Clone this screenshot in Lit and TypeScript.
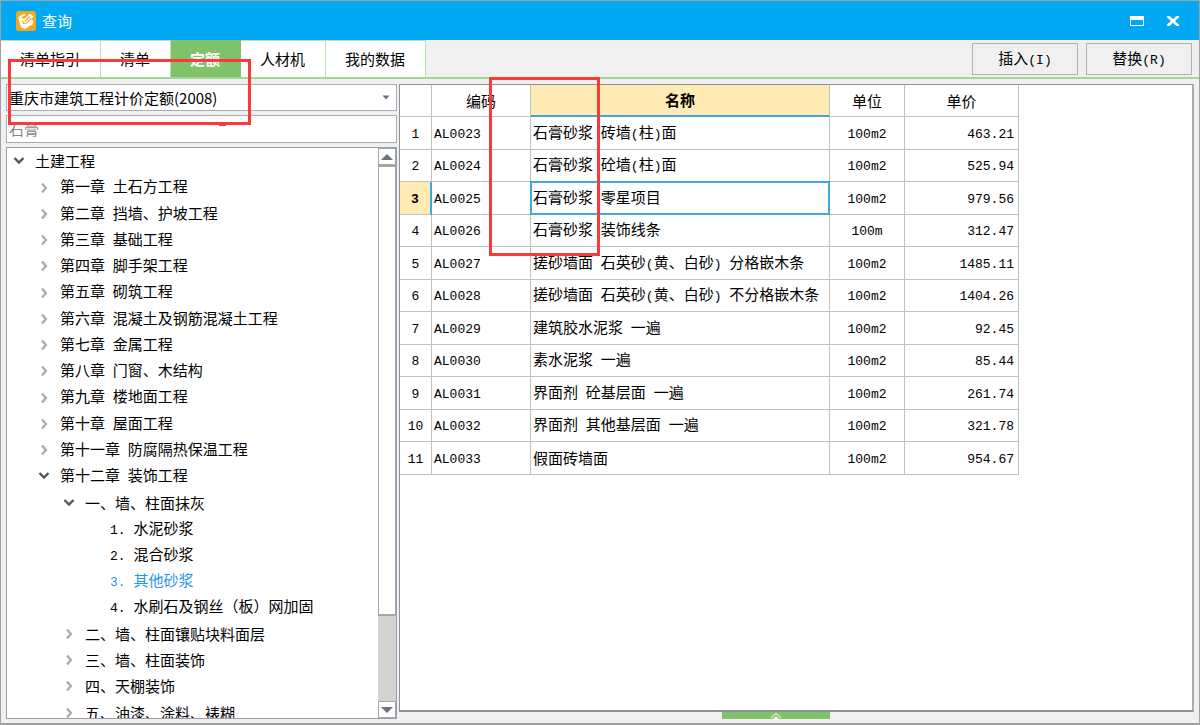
import { LitElement, html, css, svg } from "lit";
import { customElement, state } from "lit/decorators.js";

type Node = { level: number; text: string; arrow?: "open" | "closed" };

const TREE: Node[] = [
  { level: 0, text: "土建工程", arrow: "open" },
  { level: 1, text: "第一章 土石方工程", arrow: "closed" },
  { level: 1, text: "第二章 挡墙、护坡工程", arrow: "closed" },
  { level: 1, text: "第三章 基础工程", arrow: "closed" },
  { level: 1, text: "第四章 脚手架工程", arrow: "closed" },
  { level: 1, text: "第五章 砌筑工程", arrow: "closed" },
  { level: 1, text: "第六章 混凝土及钢筋混凝土工程", arrow: "closed" },
  { level: 1, text: "第七章 金属工程", arrow: "closed" },
  { level: 1, text: "第八章 门窗、木结构", arrow: "closed" },
  { level: 1, text: "第九章 楼地面工程", arrow: "closed" },
  { level: 1, text: "第十章 屋面工程", arrow: "closed" },
  { level: 1, text: "第十一章 防腐隔热保温工程", arrow: "closed" },
  { level: 1, text: "第十二章 装饰工程", arrow: "open" },
  { level: 2, text: "一、墙、柱面抹灰", arrow: "open" },
  { level: 3, text: "1. 水泥砂浆" },
  { level: 3, text: "2. 混合砂浆" },
  { level: 3, text: "3. 其他砂浆" },
  { level: 3, text: "4. 水刷石及钢丝（板）网加固" },
  { level: 2, text: "二、墙、柱面镶贴块料面层", arrow: "closed" },
  { level: 2, text: "三、墙、柱面装饰", arrow: "closed" },
  { level: 2, text: "四、天棚装饰", arrow: "closed" },
  { level: 2, text: "五、油漆、涂料、裱糊", arrow: "closed" },
];

const ROWS: [string, string, string, string][] = [
  ["AL0023", "石膏砂浆 砖墙(柱)面", "100m2", "463.21"],
  ["AL0024", "石膏砂浆 砼墙(柱)面", "100m2", "525.94"],
  ["AL0025", "石膏砂浆 零星项目", "100m2", "979.56"],
  ["AL0026", "石膏砂浆 装饰线条", "100m", "312.47"],
  ["AL0027", "搓砂墙面 石英砂(黄、白砂) 分格嵌木条", "100m2", "1485.11"],
  ["AL0028", "搓砂墙面 石英砂(黄、白砂) 不分格嵌木条", "100m2", "1404.26"],
  ["AL0029", "建筑胶水泥浆 一遍", "100m2", "92.45"],
  ["AL0030", "素水泥浆 一遍", "100m2", "85.44"],
  ["AL0031", "界面剂 砼基层面 一遍", "100m2", "261.74"],
  ["AL0032", "界面剂 其他基层面 一遍", "100m2", "321.78"],
  ["AL0033", "假面砖墙面", "100m2", "954.67"],
];

const TABS = ["清单指引", "清单", "定额", "人材机", "我的数据"];

/** Sets the half-width runs of a label in the monospaced face. */
const mixed = (text: string) =>
  text
    .split(/([\x20-\x7e]+)/)
    .filter((part) => part !== "")
    .map((part) => (/^[\x20-\x7e]/.test(part) ? html`<span class="half">${part}</span>` : part));

const chevron = (kind?: "open" | "closed") =>
  kind === "open"
    ? svg`<path d="M3.500 5 8 9.500 12.500 5" fill="none" stroke="#555" stroke-width="2.4"/>`
    : kind === "closed"
      ? svg`<path d="M6 3.500 10 8 6 12.500" fill="none" stroke="#aaa" stroke-width="2.2"/>`
      : svg``;

@customElement("app-root")
export class AppRoot extends LitElement {
  @state() private tab = 2;
  @state() private node = 16;
  @state() private row = 2;

  static styles = css`
    :host {
      display: block;
      font-family: "Noto Sans CJK SC", sans-serif;
      font-size: 15px;
      line-height: 20px;
      color: #000;
    }
    * {
      box-sizing: border-box;
    }
    button,
    select,
    input {
      font: inherit;
      color: inherit;
      margin: 0;
      padding: 0;
      border-radius: 0;
      outline: none;
    }
    .half {
      font-family: "Liberation Mono", monospace;
      font-size: 13px;
      white-space: pre;
    }
    .window {
      position: relative;
      display: flex;
      flex-direction: column;
      height: 100vh;
      border: 1px solid #a0a0a0;
      border-bottom-width: 2px;
      background: #f0f0f0;
      overflow: hidden;
    }
    .titlebar {
      display: flex;
      align-items: center;
      flex: none;
      height: 39px;
      padding: 0 19px 0 15px;
      gap: 6px;
      background: #02a9f2;
      color: #fff;
    }
    .title {
      flex: 1;
    }
    .winbtn {
      display: flex;
      border: 0;
      background: none;
      margin-left: 16px;
    }
    .toolbar {
      display: flex;
      flex: none;
      height: 39px;
      padding-right: 7px;
      border-bottom: 2px solid #a3d795;
    }
    .tabs {
      display: flex;
      flex: 1;
    }
    .tab {
      border: 0;
      border-top: 1px solid #b6e3a8;
      border-right: 1px solid #b6e3a8;
      background: #fff;
      padding: 0 20px 0 19px;
    }
    .tab.on {
      background: #80c269;
      border-color: #80c269;
      color: #fff;
      font-weight: 700;
    }
    .actions {
      display: flex;
      gap: 8px;
      padding: 3px 0 2px;
    }
    .action {
      width: 106px;
      border: 1px solid #b0b0b0;
      background: #f0f0f0;
    }
    .body {
      display: flex;
      flex: 1;
      min-height: 0;
      gap: 2px;
      padding: 5px 5px 4px;
    }
    .side {
      display: flex;
      flex-direction: column;
      flex: none;
      width: 391px;
      gap: 4px;
    }
    .picker {
      display: grid;
      align-items: center;
      height: 27px;
      border: 1px solid #abadb3;
      background: #fff;
    }
    .picker > * {
      grid-area: 1 / 1;
    }
    .picker select {
      appearance: none;
      width: 100%;
      height: 25px;
      border: 0;
      background: none;
      padding-left: 2px;
    }
    .caret {
      justify-self: end;
      margin-right: 6px;
      pointer-events: none;
    }
    .search {
      height: 28px;
      border: 1px solid #abadb3;
      background: #fff;
      padding: 0 0 2px 2px;
      color: #888;
    }
    .treebox {
      display: flex;
      flex: 1;
      min-height: 0;
      border: 1px solid #999fa8;
      background: #fff;
    }
    .tree {
      flex: 1;
      overflow: hidden;
      list-style: none;
      margin: 0;
      padding: 0;
    }
    .node {
      display: flex;
      align-items: center;
      gap: 8px;
      height: 26px;
      padding-left: 4px;
      white-space: nowrap;
      cursor: default;
    }
    .node:nth-child(4n + 2) {
      height: 27px;
    }
    .l1 {
      padding-left: 29px;
    }
    .l2 {
      padding-left: 54px;
    }
    .l3 {
      padding-left: 79px;
    }
    .node.on {
      color: #1e96f5;
    }
    .scroll {
      display: flex;
      flex-direction: column;
      flex: none;
      width: 18px;
      background: #d2d2d2;
    }
    .step {
      display: flex;
      align-items: center;
      justify-content: center;
      flex: none;
      height: 17px;
      border: 1px solid #a6a6a6;
      background: #fff;
    }
    .thumb {
      flex: 21;
      border: 1px solid #a6a6a6;
      border-top-width: 2px;
      border-bottom-width: 2px;
      background: #fff;
    }
    .track {
      flex: 4;
    }
    .main {
      display: flex;
      flex-direction: column;
      flex: 1;
      min-width: 0;
    }
    .grid {
      flex: 1;
      min-height: 0;
      overflow: hidden;
      border: 1px solid #8c929d;
      border-right: 2px solid #a9adb5;
      border-bottom-width: 2px;
      background: #fff;
    }
    table {
      table-layout: fixed;
      width: 619px;
      border-collapse: separate;
      border-spacing: 0;
    }
    .c-no {
      width: 32px;
    }
    .c-code {
      width: 99px;
    }
    .c-name {
      width: 299px;
    }
    .c-unit {
      width: 75px;
    }
    .c-price {
      width: 114px;
    }
    th,
    td {
      position: relative;
      padding: 0;
      border-right: 1px solid #c0c0c0;
      border-bottom: 1px solid #c0c0c0;
      font-weight: 400;
      white-space: nowrap;
    }
    thead tr {
      height: 32px;
    }
    tbody tr {
      height: 33px;
    }
    tbody tr:nth-child(even) {
      height: 32px;
    }
    thead .hot {
      background: #ffebb3;
      border-bottom: 2px solid #3fa9d5;
      font-weight: 700;
    }
    tbody th,
    .unit {
      text-align: center;
    }
    .code {
      padding-left: 2px;
    }
    .name {
      padding-left: 2px;
    }
    .price {
      padding-right: 4px;
      text-align: right;
    }
    .sel th {
      background: #ffebb3;
      border-right: 2px solid #3fa9d5;
      font-weight: 700;
    }
    .sel .name::after {
      content: "";
      position: absolute;
      inset: -1px -1px -1px -1px;
      border: 2px solid #3fa9d5;
    }
    .foot {
      display: flex;
      justify-content: center;
      flex: none;
      height: 7px;
      padding-right: 42px;
    }
    .handle {
      display: flex;
      justify-content: center;
      width: 108px;
      border: 0;
      background: #80c269;
    }
    .mark {
      position: absolute;
      border: 3px solid #fa3a3a;
      pointer-events: none;
    }
    .mark-a {
      left: 7px;
      top: 58px;
      width: 243px;
      height: 66px;
    }
    .mark-a::after {
      content: "";
      position: absolute;
      left: 208px;
      top: 62px;
      width: 7px;
      height: 2px;
      background: #fa3a3a;
    }
    .mark-b {
      left: 488px;
      top: 76px;
      width: 111px;
      height: 179px;
    }
  `;

  render() {
    return html`
      <div class="window">
        <header class="titlebar">
          <svg width="20" height="20" viewBox="0 0 20 20" aria-hidden="true">
            <rect width="20" height="20" rx="3" fill="#f7a61c" />
            <path d="M2.500 8 6 6.500 8 8 14 2.500 17.500 5.500 15.500 8 17.500 10 17 13 9 18 5 16.500Z" fill="#fff" />
            <path d="M3 7.500C4 5 7 4.500 9 3.500" fill="none" stroke="#fff" stroke-width="2" />
            <path d="M6.500 9.500 7.500 12.500 10.500 12 15.500 7.500M8.500 10.500 14 5.500" fill="none" stroke="#f7a61c" stroke-width="1.100" />
          </svg>
          <span class="title">查询</span>
          <button class="winbtn" aria-label="最大化">
            <svg width="14" height="10" viewBox="0 0 14 10">
              <path d="M0 0H14V10H0ZM1 4V9H13V4Z" fill="#fff" fill-rule="evenodd" />
            </svg>
          </button>
          <button class="winbtn" aria-label="关闭">
            <svg width="14" height="10" viewBox="0 0 14 10">
              <path d="M1.500 0 12.500 10M12.500 0 1.500 10" stroke="#fff" stroke-width="2.800" />
            </svg>
          </button>
        </header>

        <div class="toolbar">
          <nav class="tabs">
            ${TABS.map(
              (t, i) =>
                html`<button class="tab ${i === this.tab ? "on" : ""}" @click=${() => (this.tab = i)}>${t}</button>`
            )}
          </nav>
          <div class="actions">
            <button class="action">${mixed("插入(I)")}</button>
            <button class="action">${mixed("替换(R)")}</button>
          </div>
        </div>

        <div class="body">
          <aside class="side">
            <div class="picker">
              <select aria-label="定额库">
                <option>重庆市建筑工程计价定额(2008)</option>
              </select>
              <svg class="caret" width="8" height="5" viewBox="0 0 8 5" aria-hidden="true">
                <path d="M0.500 0.500H7.500L4 4.500Z" fill="#6d7180" />
              </svg>
            </div>
            <input class="search" type="text" aria-label="搜索" .value=${"石膏"} />
            <div class="treebox">
              <ul class="tree" role="tree">
                ${TREE.map(
                  (n, i) => html`<li
                    role="treeitem"
                    class="node l${n.level} ${i === this.node ? "on" : ""}"
                    @click=${() => (this.node = i)}
                  >
                    <svg width="16" height="16" viewBox="0 0 16 16" aria-hidden="true">${chevron(n.arrow)}</svg>
                    <span>${mixed(n.text)}</span>
                  </li>`
                )}
              </ul>
              <div class="scroll">
                <button class="step" aria-label="向上">
                  <svg width="12" height="6" viewBox="0 0 12 6"><path d="M0 6 6 0 12 6Z" fill="#6d7180" /></svg>
                </button>
                <div class="thumb"></div>
                <div class="track"></div>
                <button class="step" aria-label="向下">
                  <svg width="12" height="6" viewBox="0 0 12 6"><path d="M0 0H12L6 6Z" fill="#6d7180" /></svg>
                </button>
              </div>
            </div>
          </aside>

          <main class="main">
            <div class="grid">
              <table>
                <colgroup>
                  <col class="c-no" />
                  <col class="c-code" />
                  <col class="c-name" />
                  <col class="c-unit" />
                  <col class="c-price" />
                </colgroup>
                <thead>
                  <tr>
                    <th></th>
                    <th>编码</th>
                    <th class="hot">名称</th>
                    <th>单位</th>
                    <th>单价</th>
                  </tr>
                </thead>
                <tbody>
                  ${ROWS.map(
                    ([code, name, unit, price], i) => html`<tr
                      class=${i === this.row ? "sel" : ""}
                      @click=${() => (this.row = i)}
                    >
                      <th>${mixed(String(i + 1))}</th>
                      <td class="code">${mixed(code)}</td>
                      <td class="name">${mixed(name)}</td>
                      <td class="unit">${mixed(unit)}</td>
                      <td class="price">${mixed(price)}</td>
                    </tr>`
                  )}
                </tbody>
              </table>
            </div>
            <div class="foot">
              <button class="handle" aria-label="展开">
                <svg width="12" height="7" viewBox="0 0 12 7">
                  <path d="M1 6 6 1.500 11 6" fill="none" stroke="#cdeac2" stroke-width="1.500" />
                  <path d="M3 7 6 4.500 9 7Z" fill="#fff" />
                </svg>
              </button>
            </div>
          </main>
        </div>

        <div class="mark mark-a"></div>
        <div class="mark mark-b"></div>
      </div>
    `;
  }
}
